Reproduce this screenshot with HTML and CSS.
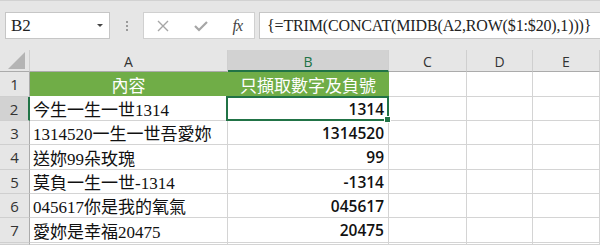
FILE: index.html
```html
<!DOCTYPE html>
<html>
<head>
<meta charset="utf-8">
<link rel="stylesheet" href="styles.css">
</head>
<body>
<div class="fbar">
  <div class="namebox"><span class="nb-text">B2</span><span class="nb-arrow"></span></div>
  <div class="dots"><i></i><i></i><i></i></div>
  <div class="btns">
    <svg class="ic" width="14" height="14" viewBox="0 0 14 14"><path d="M2 2L12 12M12 2L2 12" stroke="#a6a6a6" stroke-width="1.4" fill="none"/></svg>
    <svg class="ic" width="16" height="14" viewBox="0 0 16 14"><path d="M2 7L6 11L14 3" stroke="#a6a6a6" stroke-width="2.2" fill="none"/></svg>
    <span class="fx">fx</span>
  </div>
  <div class="formula">{=TRIM(CONCAT(MIDB(A2,ROW($1:$20),1)))}</div>
</div>
<div class="sheet">
  <div class="hd corner"><svg width="18" height="17" viewBox="0 0 18 17"><polygon points="17,0 17,17 0,17" fill="#b4b4b4"/></svg></div>
  <div class="hd col">A</div>
  <div class="hd col sel">B</div>
  <div class="hd col">C</div>
  <div class="hd col">D</div>
  <div class="hd col">E</div>

  <div class="hd row">1</div>
  <div class="c g ctr">內容</div>
  <div class="c g ctr">只擷取數字及負號</div>
  <div class="c"></div><div class="c"></div><div class="c"></div>

  <div class="hd row rsel">2</div>
  <div class="c t">今生一生一世1314</div>
  <div class="c n active">1314</div>
  <div class="c"></div><div class="c"></div><div class="c"></div>

  <div class="hd row">3</div>
  <div class="c t">1314520一生一世吾愛妳</div>
  <div class="c n">1314520</div>
  <div class="c"></div><div class="c"></div><div class="c"></div>

  <div class="hd row">4</div>
  <div class="c t">送妳99朵玫瑰</div>
  <div class="c n">99</div>
  <div class="c"></div><div class="c"></div><div class="c"></div>

  <div class="hd row">5</div>
  <div class="c t">莫負一生一世-1314</div>
  <div class="c n">-1314</div>
  <div class="c"></div><div class="c"></div><div class="c"></div>

  <div class="hd row">6</div>
  <div class="c t">045617你是我的氧氣</div>
  <div class="c n">045617</div>
  <div class="c"></div><div class="c"></div><div class="c"></div>

  <div class="hd row">7</div>
  <div class="c t">愛妳是幸福20475</div>
  <div class="c n">20475</div>
  <div class="c"></div><div class="c"></div><div class="c"></div>

  <div class="hd row"></div>
  <div class="c"></div><div class="c"></div><div class="c"></div><div class="c"></div><div class="c"></div>
</div>
</body>
</html>
```
FILE: styles.css
```css
* { box-sizing: border-box; }
html, body { margin: 0; padding: 0; }
body {
  width: 600px;
  height: 245px;
  overflow: hidden;
  background: #fff;
  font-family: "Liberation Serif", "Noto Sans CJK TC", serif;
}
.fbar {
  height: 50px;
  background: #e6e6e6;
  border-top: 1px solid #d2d2d2;
  display: flex;
  align-items: flex-start;
  padding: 11px 0 0 5px;
}
.namebox {
  width: 105px;
  height: 27px;
  background: #fff;
  border: 1px solid #c6c6c6;
  display: flex;
  align-items: center;
  justify-content: space-between;
  padding: 0 6px 0 5px;
}
.nb-text { font-size: 17px; color: #222; }
.nb-arrow {
  width: 0; height: 0;
  border-left: 3px solid transparent;
  border-right: 3px solid transparent;
  border-top: 3px solid #444;
}
.dots {
  width: 33px;
  height: 27px;
  display: flex;
  flex-direction: column;
  align-items: center;
  justify-content: center;
  gap: 2px;
}
.dots i { width: 2px; height: 2px; background: #9a9a9a; display: block; }
.btns {
  width: 112px;
  height: 27px;
  background: #fff;
  border: 1px solid #d0d0d0;
  display: flex;
  align-items: center;
  justify-content: space-between;
  padding: 0 12px;
}
.fx {
  font-family: "Liberation Serif", serif;
  font-style: italic;
  font-size: 16px;
  color: #444;
  letter-spacing: -1px;
}
.formula {
  margin-left: 4px;
  flex: 1;
  height: 27px;
  background: #fff;
  border: 1px solid #c6c6c6;
  border-right: none;
  padding-left: 7px;
  font-size: 16px;
  letter-spacing: -0.15px;
  line-height: 25px;
  color: #222;
  white-space: nowrap;
  overflow: hidden;
}
.sheet {
  display: grid;
  grid-template-columns: 30px 198px 161px 78px 66px 1fr;
  grid-template-rows: 22px 25px 24px 24px 25px 24px 24px 25px 2px;
}
.hd {
  background: #e6e6e6;
  border-right: 1px solid #cfcfcf;
  border-bottom: 1px solid #cfcfcf;
  font-family: "Open Sans", "Noto Sans", sans-serif;
  color: #333;
  display: flex;
  align-items: center;
  justify-content: center;
}
.corner { justify-content: flex-end; align-items: flex-end; padding: 0 3px 2px 0; border-bottom: 1px solid #ababab; }
.col { font-size: 14px; border-bottom: 1px solid #ababab; padding-top: 2px; }
.col.sel { background: #d2d2d2; color: #217346; border-bottom: 2px solid #217346; }
.row { font-size: 15px; border-right: 1px solid #ababab; }
.row.rsel { background: #d2d2d2; border-right: 2px solid #217346; }
.c {
  border-right: 1px solid #d4d4d4;
  border-bottom: 1px solid #d4d4d4;
  display: flex;
  align-items: center;
  white-space: nowrap;
  overflow: hidden;
  color: #111;
}
.g {
  background: #70ad47;
  color: #fff;
  font-size: 17px;
  border-right-color: #70ad47;
  border-bottom-color: #fff;
  padding-top: 1px;
}
.ctr { justify-content: center; }
.t { font-size: 17px; padding-left: 3px; }
.n {
  justify-content: flex-end;
  padding-right: 4px;
  font-family: "Open Sans", "Noto Sans", sans-serif;
  font-weight: 600;
  font-size: 15.5px;
}
.active { position: relative; overflow: visible; }
.active::after {
  content: "";
  position: absolute;
  left: -2px; top: -1px; right: -1px; bottom: -1px;
  border: 2px solid #217346;
}
.active::before {
  content: "";
  position: absolute;
  right: -3px; bottom: -3px;
  width: 5px; height: 5px;
  background: #217346;
  border: 1px solid #fff;
  z-index: 2;
}
```
